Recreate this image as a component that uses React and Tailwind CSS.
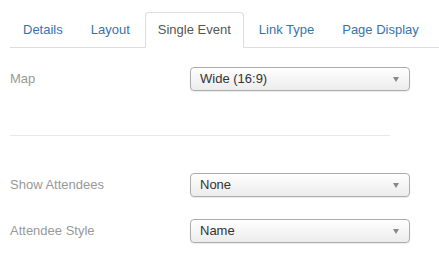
const tabs = ['Details', 'Layout', 'Single Event', 'Link Type', 'Page Display']

function Select({ value }) {
  return (
    <div className="flex h-[24px] w-[220px] items-center justify-between rounded-[4px] border border-[#acacac] bg-gradient-to-b from-white to-[#ececec] pl-[9px] pr-[10px] text-[13px] text-[#333] shadow-[0_1px_1px_rgba(0,0,0,0.08)]">
      <span>{value}</span>
      <span className="h-0 w-0 border-x-[3px] border-t-[5px] border-x-transparent border-t-[#888]" />
    </div>
  )
}

function Row({ label, value, className = '' }) {
  return (
    <div className={`flex items-center ${className}`}>
      <label className="w-[180px] text-[13px] text-[#999]">{label}</label>
      <Select value={value} />
    </div>
  )
}

export default function App() {
  return (
    <div className="h-[271px] w-[439px] bg-white font-['Liberation_Sans',Arial,sans-serif] text-[13px] leading-[18px]">
      <ul className="ml-[10px] flex border-b border-[#ddd] pt-3">
        {tabs.map((t, i) => {
          const active = i === 2
          return (
            <li key={t} className="-mb-px mr-[2px]">
              <a
                className={
                  active
                    ? 'block rounded-t-[4px] border border-[#ddd] border-b-white bg-white px-3 py-2 text-[#555]'
                    : 'block rounded-t-[4px] border border-transparent px-3 py-2 text-[#3a72aa]'
                }
              >
                {t}
              </a>
            </li>
          )
        })}
      </ul>
      <div className="pl-[10px]">
        <Row label="Map" value="Wide (16:9)" className="mt-[19px]" />
        <hr className="mt-[44px] w-[380px] border-t border-[#e8e8e8]" />
        <Row label="Show Attendees" value="None" className="mt-[37px]" />
        <Row label="Attendee Style" value="Name" className="mt-[22px]" />
      </div>
    </div>
  )
}
